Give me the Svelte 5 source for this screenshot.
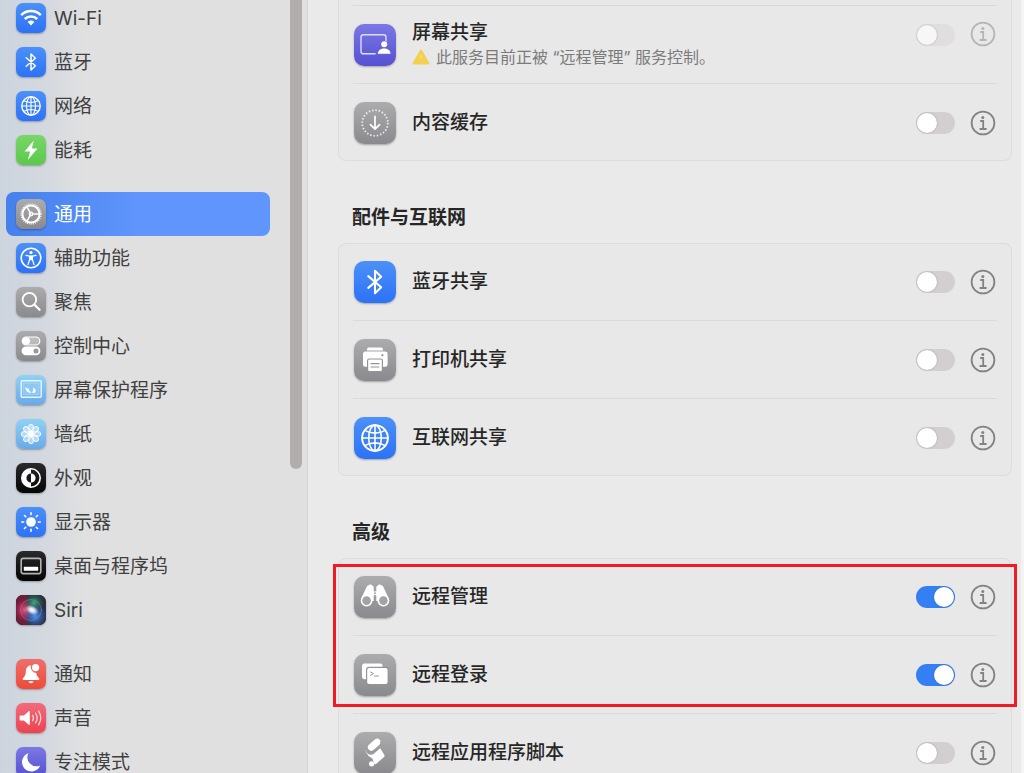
<script>
  const sidebar = [
    [
      { label: 'Wi-Fi', icon: 'wifi', tone: 'blue' },
      { label: '蓝牙', icon: 'bluetooth', tone: 'blue' },
      { label: '网络', icon: 'globe', tone: 'blue' },
      { label: '能耗', icon: 'bolt', tone: 'green' },
    ],
    [
      { label: '通用', icon: 'gear', tone: 'gray' },
      { label: '辅助功能', icon: 'access', tone: 'blue' },
      { label: '聚焦', icon: 'search', tone: 'gray' },
      { label: '控制中心', icon: 'control', tone: 'gray' },
      { label: '屏幕保护程序', icon: 'saver', tone: 'sky' },
      { label: '墙纸', icon: 'flower', tone: 'sky' },
      { label: '外观', icon: 'appearance', tone: 'black' },
      { label: '显示器', icon: 'sun', tone: 'blue' },
      { label: '桌面与程序坞', icon: 'dock', tone: 'black' },
      { label: 'Siri', icon: 'siri', tone: 'black' },
    ],
    [
      { label: '通知', icon: 'bell', tone: 'red' },
      { label: '声音', icon: 'sound', tone: 'pink' },
      { label: '专注模式', icon: 'moon', tone: 'purple' },
    ],
  ];

  let current = $state('通用');

  let services = $state([
    {
      title: '',
      rows: [
        {
          label: '屏幕共享',
          icon: 'screen',
          tone: 'purple',
          on: false,
          locked: true,
          note: '此服务目前正被 “远程管理” 服务控制。',
        },
        { label: '内容缓存', icon: 'cache', tone: 'gray', on: false },
      ],
    },
    {
      title: '配件与互联网',
      rows: [
        { label: '蓝牙共享', icon: 'bluetooth', tone: 'blue', on: false },
        { label: '打印机共享', icon: 'printer', tone: 'gray', on: false },
        { label: '互联网共享', icon: 'globe', tone: 'blue', on: false },
      ],
    },
    {
      title: '高级',
      marked: true,
      rows: [
        { label: '远程管理', icon: 'binoculars', tone: 'gray', on: true },
        { label: '远程登录', icon: 'terminal', tone: 'gray', on: true },
        { label: '远程应用程序脚本', icon: 'script', tone: 'gray', on: false },
      ],
    },
  ]);

  const petals = [0, 45, 90, 135, 180, 225, 270, 315];
  const large = ['screen', 'cache', 'printer', 'binoculars', 'terminal', 'script'];
</script>

{#snippet glyph(name)}
  <svg viewBox={large.includes(name) ? '0 0 42 42' : '0 0 30 30'} fill="none" stroke="#fff" stroke-linecap="round" stroke-linejoin="round" aria-hidden="true">
    {#if name === 'wifi'}
      <g stroke-width="2.5" stroke-linecap="butt">
        <path d="M5.2 12.2a13.8 13.8 0 0 1 19.6 0" />
        <path d="M8.8 16a8.8 8.8 0 0 1 12.4 0" />
      </g>
      <path d="M11.6 18.9a4.8 4.8 0 0 1 6.8 0L15 22.4z" fill="#fff" stroke="none" />
    {:else if name === 'bluetooth'}
      <path d="M10.2 10.8l9.2 8L15 23V7l4.4 4.2-9.2 8" stroke-width="1.5" />
    {:else if name === 'globe'}
      <g stroke-width="1.1">
        <circle cx="15" cy="15" r="9.2" stroke-width="1.4" />
        <ellipse cx="15" cy="15" rx="4.5" ry="9.2" />
        <path d="M15 5.8v18.4M5.8 15h18.4M7.6 9.6q7.4 3.8 14.8 0M7.6 20.4q7.4-3.8 14.8 0" />
      </g>
    {:else if name === 'bolt'}
      <path d="M17.8 5.5L8.5 16.6h5.6L11.8 25l9.7-11.5h-5.7z" fill="#fff" stroke="none" />
    {:else if name === 'gear'}
      <circle cx="15" cy="15" r="8.6" stroke-width="2" />
      <circle cx="15" cy="15" r="10" stroke-width="1.2" stroke-dasharray="1 1.1" stroke-linecap="butt" />
      <path d="M16 15h7M14.5 14.2l-3.6-6.3M14.5 15.8l-3.6 6.3" stroke-width="1.5" />
      <circle cx="15" cy="15" r="1.8" stroke-width="1.2" />
    {:else if name === 'access'}
      <circle cx="15" cy="15" r="9.8" stroke-width="1.6" />
      <circle cx="15" cy="9.5" r="1.6" fill="#fff" stroke="none" />
      <path d="M10 12.3l3.6.8v3.5l-1.6 5M20 12.3l-3.6.8v3.5l1.6 5M13.6 13.2h2.8" stroke-width="1.3" />
      <path d="M13.4 12.8h3.2v4.4h-3.2z" fill="#fff" stroke="none" />
    {:else if name === 'search'}
      <circle cx="13.4" cy="12.6" r="6.8" stroke-width="1.8" />
      <path d="M18.4 17.6l5.2 5.2" stroke-width="2.2" />
    {:else if name === 'control'}
      <rect x="6.2" y="6" width="17.6" height="8" rx="4" fill="#fff" fill-opacity=".3" stroke-width="1.2" />
      <circle cx="10.2" cy="10" r="3.8" fill="#fff" stroke="none" />
      <rect x="5.6" y="15.6" width="18.8" height="8.6" rx="4.3" fill="#fff" stroke="none" />
      <circle cx="20" cy="19.9" r="2.5" fill="#99999c" stroke="none" />
    {:else if name === 'saver'}
      <rect x="5.2" y="5.8" width="20" height="16.4" rx="1" stroke="#e8f6ff" stroke-width="1.4" />
      <rect x="7.6" y="8.2" width="15.2" height="11.6" stroke="#c4e5fa" stroke-width=".5" fill="#8cc9f2" />
      <path d="M9.8 12.8c0 3.4 2.2 5 5.2 4.6-1.8-.8-2.6-2-2.4-4-.8.8-1.8.6-2.8-.6zM17.6 13.2c1.6.4 2.2 2.6 1.4 4.2h-2.8c1.2-1.2 1.6-2.6 1.4-4.2z" fill="#fff" stroke="#fff" stroke-width=".6" />
    {:else if name === 'flower'}
      {#each petals as angle}
        <ellipse cx="15" cy="8.4" rx="2.5" ry="3.2" transform="rotate({angle} 15 15)" fill="#fff" fill-opacity=".45" stroke-width=".9" />
      {/each}
      <circle cx="15" cy="15" r="3.2" fill="#fff" stroke="none" />
    {:else if name === 'appearance'}
      <circle cx="15" cy="15" r="9.2" stroke-width="1.6" />
      <path d="M15 5.8a9.2 9.2 0 0 0 0 18.4v-4.6a4.6 4.6 0 0 1 0-9.2z" fill="#fff" stroke="none" />
      <path d="M15 10.4a4.6 4.6 0 0 1 0 9.2z" fill="#fff" stroke="none" />
    {:else if name === 'sun'}
      <circle cx="15" cy="15" r="4.8" fill="#fff" stroke="none" />
      {#each petals as angle}
        <path d="M15 5.8v1.8" stroke-width="1.6" transform="rotate({angle} 15 15)" />
      {/each}
    {:else if name === 'dock'}
      <rect x="5.2" y="7.4" width="19.6" height="15.2" rx="2" stroke="#b4b4b4" stroke-width="1.6" />
      <rect x="7.8" y="15.8" width="14.4" height="4" rx=".6" fill="#fff" stroke="none" />
    {:else if name === 'siri'}
      <defs>
        <radialGradient id="siri-core"><stop offset="0" stop-color="#fff" /><stop offset=".4" stop-color="#fff" stop-opacity=".8" /><stop offset="1" stop-color="#fff" stop-opacity="0" /></radialGradient>
        <radialGradient id="siri-pink"><stop offset="0" stop-color="#e85f8a" /><stop offset="1" stop-color="#b32450" stop-opacity=".1" /></radialGradient>
        <radialGradient id="siri-green"><stop offset="0" stop-color="#3cab86" /><stop offset="1" stop-color="#187055" stop-opacity="0" /></radialGradient>
        <radialGradient id="siri-blue"><stop offset="0" stop-color="#4c9af5" /><stop offset="1" stop-color="#2f63d8" stop-opacity="0" /></radialGradient>
      </defs>
      <g stroke="none">
        <rect width="30" height="30" rx="7" fill="#2b3040" />
        <path d="M7 0h4v30H7a7 7 0 0 1-7-7V7a7 7 0 0 1 7-7z" fill="#6e1c3a" />
        <circle cx="9" cy="15" r="11" fill="url(#siri-pink)" />
        <circle cx="18" cy="8" r="10" fill="url(#siri-green)" />
        <circle cx="19" cy="21" r="12" fill="url(#siri-blue)" />
        <circle cx="15" cy="15" r="10.5" stroke="#b9c4d8" stroke-opacity=".35" stroke-width=".8" />
        <ellipse cx="16" cy="15" rx="7" ry="4.5" transform="rotate(25 16 15)" fill="url(#siri-core)" />
      </g>
    {:else if name === 'bell'}
      <path d="M14.8 6.2c-3.6.6-5 3.4-5 6.6 0 3.2-1 4.6-2.8 6.4-.6.8-.2 1.8.8 1.8h14.4c1 0 1.4-1 .8-1.8-1.6-1.6-2.6-3-2.8-5.4-3.4 0-6-3.6-5.4-7.6z" fill="#fff" stroke="none" />
      <circle cx="19.6" cy="8.6" r="3.6" fill="#fff" stroke="none" />
      <path d="M12.6 22.2h4.8a2.4 2 0 0 1-4.8 0z" fill="#fff" stroke="none" />
    {:else if name === 'sound'}
      <path d="M4.4 12.4h3.4l5-4.2c.5-.4 1-.2 1 .4v12.8c0 .6-.5.8-1 .4l-5-4.2H4.4c-.4 0-.8-.4-.8-.8v-3.6c0-.4.4-.8.8-.8z" fill="#fff" stroke="none" />
      <path d="M16.6 12.2q1.7 2.8 0 5.6M19.6 10.2q3 4.8 0 9.6M22.6 8.2q4.4 6.8 0 13.6" stroke="#ffdfe2" stroke-width="1.2" />
    {:else if name === 'moon'}
      <path d="M12.4 6.2a9.4 9.4 0 1 0 11.8 12.2A9 9 0 0 1 12.4 6.2z" fill="#fff" stroke="none" />
    {:else if name === 'screen'}
      <rect x="7" y="10.8" width="25" height="19" rx="2.4" stroke="#dcdcff" stroke-width="1.4" />
      <path d="M21.6 31v-3q2-4.6 4.8-5.4-1-5.4 3.8-5.8 4.6.4 3.8 5.8L34 24v7z" fill="#6560d8" stroke="none" />
      <circle cx="30.2" cy="20.2" r="3" fill="#fff" stroke="none" />
      <path d="M23.8 29.8c.4-3.4 3-5.2 6.4-5.2s6 1.8 6.4 5.2z" fill="#fff" stroke="none" />
    {:else if name === 'cache'}
      <circle cx="21" cy="21" r="12.8" stroke-width="1.8" stroke-dasharray="1.4 1.95" stroke-linecap="butt" opacity=".85" />
      <path d="M21 14.4v12.4M16.4 22.6l4.6 4.6 4.6-4.6" stroke-width="1.7" />
    {:else if name === 'printer'}
      <g fill="#fff" stroke="none">
        <path d="M13 11.4v-1q0-1.8 1.8-1.8h12.4q1.8 0 1.8 1.8v1z" />
        <rect x="9" y="12.6" width="24.6" height="15.2" rx="2.4" />
      </g>
      <circle cx="28.4" cy="16.2" r="1.1" fill="#98989b" stroke="none" />
      <rect x="13.6" y="20" width="14.8" height="12.6" rx="1.6" fill="#fff" stroke="#949497" stroke-width="1.2" />
      <path d="M17 24.6h8M17 28h8" stroke="#949497" stroke-width="1.2" />
    {:else if name === 'binoculars'}
      <g fill="#fff" stroke="none">
        <path d="M7.4 22L12.6 11q.6-1.400 1.800-1.400.4-1 2-1t2 1.200q1.200.2 1.300 1.600V25H12z" />
        <path d="M34.600 22L29.400 11q-.6-1.400-1.800-1.400-.4-1-2-1t-2 1.200q-1.200.2-1.300 1.600V25H30z" />
        <path d="M19 15.400h4v3.800h-4z" />
        <circle cx="12.600" cy="24.600" r="5.900" />
        <circle cx="29.400" cy="24.600" r="5.900" />
      </g>
      <g fill="#a3a3a6" stroke="none">
        <circle cx="12.600" cy="24.600" r="4.300" />
        <circle cx="29.400" cy="24.600" r="4.300" />
        <circle cx="21" cy="17.300" r="1" />
      </g>
    {:else if name === 'terminal'}
      <rect x="8" y="9.6" width="20.6" height="15.6" rx="2.4" fill="#fff" stroke="none" />
      <rect x="12.6" y="13.4" width="21.6" height="17.2" rx="2.4" fill="#fff" stroke="#949497" stroke-width="1.2" />
      <path d="M16.6 18l2.8 1.6-2.8 1.6M20.6 22h3.6" stroke="#949497" stroke-width="1" />
    {:else if name === 'script'}
      <path d="M17.400 15.200l5.800-5" stroke-width="7" />
      <path d="M26.800 9.800v3.400l-7.400 6.600q-2.400 1.600-5-.8" stroke="#9a9a9d" stroke-width="1" />
      <path d="M11.800 17.400q.6 4.600 4.800 5.400 2 .2 3.200-1l6.400-5.600 4.200 6.800q.6 1.200-.4 2l-8 7q-1.200.8-1.800-.6l-1.800-4.800q-4.200-1.800-6.200-6.200-.6-1.600-.4-3z" fill="#fff" stroke="none" />
      <circle cx="17.600" cy="31.800" r="2.600" fill="#fff" stroke="none" />
    {/if}
  </svg>
{/snippet}

<div class="window">
  <aside>
    <nav>
      {#each sidebar as group}
        <ul>
          {#each group as item}
            <li>
              <a
                href="#{item.icon}"
                class:selected={current === item.label}
                onclick={() => (current = item.label)}
              >
                <span class="tile {item.tone}">{@render glyph(item.icon)}</span>
                <span class="name">{item.label}</span>
              </a>
            </li>
          {/each}
        </ul>
      {/each}
    </nav>
    <div class="scrollbar"></div>
  </aside>

  <main>
    {#each services as section, i}
      <section>
        {#if section.title}<h2>{section.title}</h2>{/if}
        <div class="card" class:continued={i === 0}>
          {#each section.rows as row}
            <div class="row">
              <span class="tile big {row.tone}">{@render glyph(row.icon)}</span>
              <div class="text">
                <label for="switch-{row.icon}-{i}">{row.label}</label>
                {#if row.note}
                  <p>
                    <svg class="warning" viewBox="0 0 18 16" aria-hidden="true">
                      <path d="M9 1.5L16.5 14.5H1.5z" fill="#f5cf52" stroke="#f5cf52" stroke-width="2" stroke-linejoin="round" />
                      <path d="M9 6v4M9 12v.5" stroke="#f9e08d" stroke-width="1.2" />
                    </svg>
                    {row.note}
                  </p>
                {/if}
              </div>
              <div class="controls" class:raised={row.note}>
                <input
                  id="switch-{row.icon}-{i}"
                  type="checkbox"
                  role="switch"
                  disabled={row.locked}
                  bind:checked={row.on}
                />
                <button type="button" class="info" disabled={row.locked} aria-label={row.label}>
                  <svg viewBox="0 0 26 26" fill="none" stroke="currentColor" aria-hidden="true">
                    <circle cx="13" cy="13" r="11.4" stroke-width="1.8" />
                    <circle cx="12.8" cy="7.4" r="1.5" fill="currentColor" stroke="none" />
                    <path d="M10.2 11h3v8M9.6 19h7" stroke-width="1.8" />
                  </svg>
                </button>
              </div>
            </div>
          {/each}
          {#if section.marked}<div class="marker"></div>{/if}
        </div>
      </section>
    {/each}
  </main>
</div>

<style>
  :global(body) {
    background: #ebeaea;
  }

  .window {
    display: flex;
    height: 100vh;
    overflow: hidden;
    font-family: Inter, 'Noto Sans CJK SC', sans-serif;
    font-size: 19px;
    line-height: 24px;
    color: #262626;
  }

  aside {
    flex: 0 0 auto;
    display: flex;
    justify-content: space-between;
    box-sizing: border-box;
    width: 308px;
    padding: 0 5px 0 6px;
    border-right: 1px solid #d8d4d5;
    background: linear-gradient(90deg, #ccd4de 0, #d5d9df 50px, #e0e0e0 84px);
  }

  nav {
    width: 264px;
    margin-top: -4px;
  }

  ul {
    margin: 0 0 20px;
    padding: 0;
    list-style: none;
  }

  a {
    display: flex;
    align-items: center;
    gap: 8px;
    height: 44px;
    padding-left: 10px;
    border-radius: 8px;
    color: #404040;
    text-decoration: none;
  }

  a.selected {
    background: linear-gradient(90deg, #4580ec, #5f95fc 50%);
    color: #fff;
  }

  .name {
    padding-top: 2px;
  }

  .scrollbar {
    width: 12px;
    height: 469px;
    border-radius: 0 0 6px 6px;
    background: #b1adad;
  }

  .tile {
    flex: 0 0 auto;
    width: 30px;
    height: 30px;
    border-radius: 7px;
    box-shadow: 0 1px 2px rgb(0 0 0 / 30%);
  }

  .tile.big {
    width: 42px;
    height: 42px;
    border-radius: 10px;
  }

  .tile svg {
    display: block;
    width: 100%;
    height: 100%;
  }

  .blue {
    background: linear-gradient(#4c90f8, #2c72f6);
  }

  .green {
    background: linear-gradient(#79d667, #5bc94c);
  }

  .gray {
    background: linear-gradient(#acacae, #8a8a8e);
  }

  .sky {
    background: linear-gradient(#8fd2f5, #6aa9e8);
  }

  .black {
    background: linear-gradient(#2a2a2c, #050505);
  }

  .red {
    background: linear-gradient(#ee6f6b, #ef4a39);
  }

  .pink {
    background: linear-gradient(#ef6c7d, #ee4350);
  }

  .purple {
    background: linear-gradient(#7c78e4, #5551d2);
  }

  main {
    flex: 1;
    min-width: 0;
    padding: 0 9px 0 30px;
    border-right: 3px solid #f5f3f3;
    background: #ebeaea;
  }

  h2 {
    margin: 0;
    padding: 45px 14px 13px;
    font-size: 19px;
    font-weight: 700;
    line-height: 24px;
  }

  .card {
    position: relative;
    padding: 0 15px;
    border-radius: 8px;
    background: #e8e8e8;
    box-shadow: inset 0 0 0 1px #dedcdc;
  }

  .card.continued {
    margin-top: -8px;
    padding-top: 13px;
  }

  .row {
    display: flex;
    align-items: center;
    height: 77px;
    padding: 0 1px;
  }

  .row + .row,
  .continued .row {
    border-top: 1px solid #dbdada;
  }

  .text {
    flex: 1;
    min-width: 0;
    margin-left: 16px;
  }

  label {
    display: block;
    padding-top: 1px;
    font-weight: 500;
  }

  p {
    display: flex;
    align-items: center;
    gap: 6px;
    margin: 0;
    color: #7b7b7b;
    font-size: 16px;
    white-space: nowrap;
  }

  .warning {
    width: 18px;
    height: 16px;
  }

  .controls {
    display: flex;
    align-items: center;
    gap: 15px;
  }

  .controls.raised {
    align-self: flex-start;
    padding-top: 15px;
  }

  input {
    display: flex;
    align-items: center;
    appearance: none;
    width: 39px;
    height: 22px;
    margin: 1px 0 0;
    padding: 1px;
    box-sizing: border-box;
    border-radius: 11px;
    background: #d3cfd0;
  }

  input::before {
    content: '';
    width: 20px;
    height: 20px;
    border-radius: 50%;
    background: #fff;
    box-shadow: 0 0 2px rgb(0 0 0 / 25%);
  }

  input:checked {
    justify-content: flex-end;
    background: #357ff5;
  }

  input:disabled {
    background: #e1dedf;
  }

  input:disabled::before {
    background: #f8f7f7;
  }

  .info {
    width: 26px;
    height: 26px;
    padding: 0;
    border: 0;
    background: none;
    color: #838182;
  }

  .info:disabled {
    color: #b7b4b5;
  }

  .info svg {
    display: block;
  }

  .marker {
    position: absolute;
    top: 6px;
    right: -5px;
    left: -5px;
    height: 137px;
    border: 3px solid #ef1c25;
    pointer-events: none;
  }
</style>
